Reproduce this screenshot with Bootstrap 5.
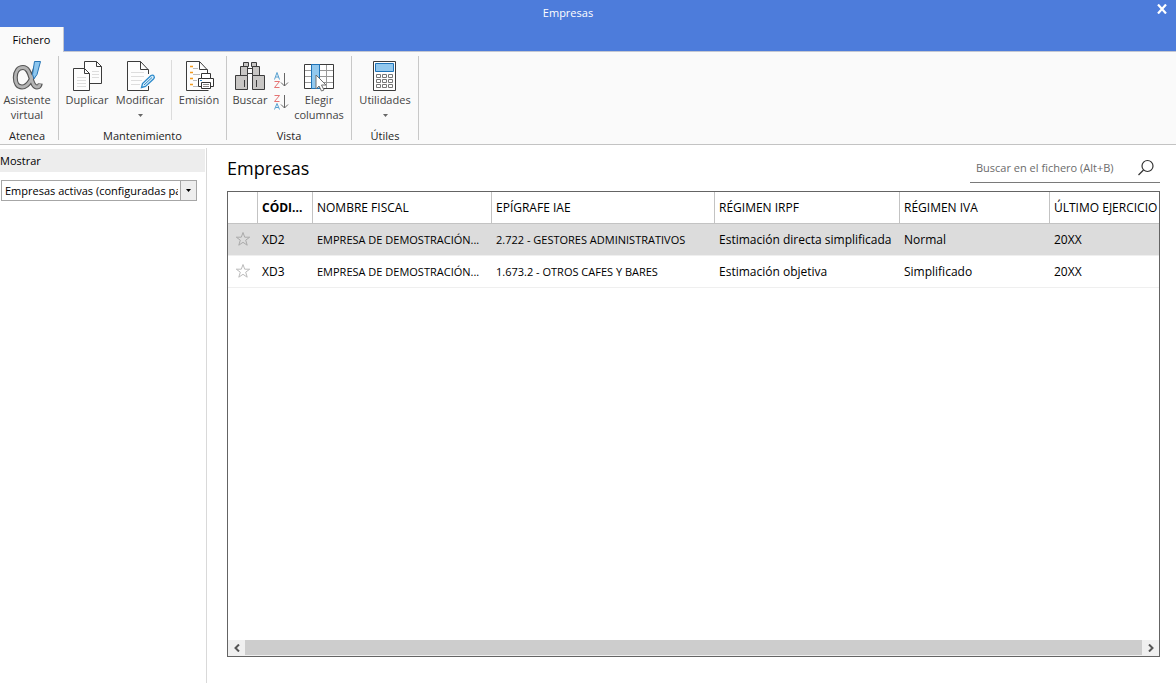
<!DOCTYPE html>
<html lang="es">
<head>
<meta charset="utf-8">
<meta name="viewport" content="width=device-width, initial-scale=1">
<title>Empresas</title>
<link href="https://cdn.jsdelivr.net/npm/bootstrap@5.3.0/dist/css/bootstrap.min.css" rel="stylesheet">
<style>
  body { font-family: "Open Sans", "Noto Sans", sans-serif; font-size: 12px; line-height: 16px; color: #000; background: #fff; }
  button { font: inherit; color: inherit; background: none; border: 0; padding: 0; }
  svg { display: block; flex: none; }
  .top-bar { background: #4d7cdb; height: 27px; color: #fff; }
  .window-title { padding: 5px 12px 0 0; font-size: 11px; }
  .close-btn { width: 28px; height: 18px; }
  .tab-strip { background: #4d7cdb; height: 25px; border-bottom: 1px solid #c3c7d2; }
  .tab-link { width: 64px; height: 25px; background: #fafafa; color: #000; font-size: 11px; line-height: 26px; text-align: center; text-decoration: none; border-right: 1px solid #c3c7d2; }
  .ribbon { background: #fafafa; border-bottom: 1px solid #c3c3c3; padding: 4px 0; font-size: 11px; line-height: 15px; color: #444; }
  .ribbon-group { border-right: 1px solid #c8c8c8; height: 84px; }
  .ribbon-items { height: 72px; padding-top: 4px; }
  .group-caption { color: #1e1e1e; text-align: center; height: 15px; }
  .tool { display: flex; flex-direction: column; align-items: center; height: 66px; white-space: nowrap; }
  .tool svg.arrow { margin-top: 7px; }
  .w-a { width: 54px; } .w-b { width: 56px; } .w-c { width: 50px; } .w-d { width: 54px; }
  .w-e { width: 46px; } .w-f { width: 16px; } .w-g { width: 60px; margin-right: 2px; } .w-h { width: 66px; }
  .inner-rule { width: 1px; height: 60px; margin-left: 6px; background: #dcdcdc; }
  .side-panel { width: 207px; border-right: 1px solid #d9d9d9; font-size: 11px; margin-top: 3px; padding-right: 1px; }
  .side-title { background: #ededed; height: 23px; line-height: 24px; margin-top: 1px; }
  .filter { width: 196px; height: 21px; margin: 8px 0 0 1px; border: 1px solid #a6a6a6; position: relative; }
  .filter select { width: 100%; height: 100%; border: 0; appearance: none; background: #fff; color: #000; padding: 0 18px 0 3px; border-radius: 0; font-size: 11px; overflow: hidden; }
  .filter-arrow { position: absolute; right: 0; top: 0; bottom: 0; width: 16px; border-left: 1px solid #a6a6a6; background: #eee; pointer-events: none; }
  .main-area { padding: 10px 16px 26px 20px; min-width: 0; }
  .page-title { font-size: 18px; line-height: 26px; font-weight: 400; margin: 0; }
  .search-box { width: 190px; height: 28px; border-bottom: 1px solid #7a7a7a; padding-bottom: 1px; }
  .search-box input { border: 0; outline: 0; background: none; padding: 0 0 0 6px; min-width: 0; font-size: 11px; color: #000; }
  .search-box input::placeholder { color: #6b6b6b; opacity: 1; }
  .search-box button { margin-right: 5px; }
  .grid-frame { border: 1px solid #646464; margin-top: 8px; }
  .data-grid { table-layout: fixed; width: 100%; min-width: 931px; border-collapse: separate; border-spacing: 0; }
  .data-grid th, .data-grid td { height: 32px; padding: 0 0 0 4px; white-space: nowrap; overflow: hidden; text-overflow: ellipsis; font-weight: 400; border-bottom: 1px solid #efefef; }
  .data-grid th { border-bottom-color: #c3c3c3; border-right: 1px solid #c3c3c3; }
  .data-grid th:last-child { border-right: 0; }
  .data-grid th.sorted { font-weight: 700; }
  .data-grid tr.chosen td { background: #dcdcdc; }
  .data-grid td.caps { font-size: 11px; }
  .data-grid td:first-child { padding: 0 0 1px 7px; }
  .col-star { width: 30px; } .col-code { width: 55px; } .col-name { width: 179px; }
  .col-iae { width: 223px; } .col-irpf { width: 185px; } .col-iva { width: 150px; }
  .scroll-strip { height: 16px; background: #f0f0f0; }
  .scroll-strip button { width: 17px; height: 15px; display: grid; place-items: center; }
  .scroll-thumb { height: 15px; background: #cdcdcd; }
</style>
</head>
<body class="d-flex flex-column min-vh-100">

<header>
  <div class="top-bar d-flex">
    <div class="window-title flex-grow-1 text-center">Empresas</div>
    <button class="close-btn d-flex justify-content-center align-items-center" type="button" aria-label="Cerrar">
      <svg width="10" height="10" viewBox="0 0 10 10"><path d="M1 .5 9 9.500M9 .5 1 9.500" stroke="#fff" stroke-width="2.200"/></svg>
    </button>
  </div>
  <nav class="tab-strip d-flex"><a class="tab-link" href="#">Fichero</a></nav>

  <div class="ribbon d-flex" role="toolbar" aria-label="Fichero">
    <section class="ribbon-group pe-1">
      <div class="ribbon-items d-flex">
        <button class="tool w-a" type="button">
          <svg class="icon" width="32" height="32" viewBox="0 0 32 32" fill="none">
            <path d="M25 7C22.500 15 18.500 27 11 27 6.500 27 4.300 23 4.300 17.500 4.300 11.500 7.300 7.500 12 7.500 21 7.500 19 27 26 27 28 27 29 25.500 29.300 23.500" stroke="#555" stroke-width="5"/>
            <path d="M24.500 8.500C22.500 15 18.500 27 11 27 6.500 27 4.300 23 4.300 17.500 4.300 11.500 7.300 7.500 12 7.500 21 7.500 19 27 26 27 27.800 27 28.700 25.800 29 24" stroke="#b4b4b4" stroke-width="2.800"/>
            <path d="M23.500 1.500h6L26 14.500l-3 4.300-1.500-4.500Z" fill="#8dc6ee" stroke="#2574b5"/>
          </svg>
          <span>Asistente<br>virtual</span>
        </button>
      </div>
      <div class="group-caption">Atenea</div>
    </section>

    <section class="ribbon-group">
      <div class="ribbon-items d-flex">
        <button class="tool w-b" type="button">
          <svg class="icon" width="32" height="32" viewBox="0 0 32 32" fill="none">
            <path d="M13.500 1.500h12l5 5v17h-17Z" fill="#fdfdfd" stroke="#3b3b3b"/>
            <path d="M25.500 1.500v5h5" stroke="#3b3b3b"/>
            <path d="M21 11.500h7M21 14.500h7M21 17.500h7" stroke="#ddd"/>
            <path d="M2.500 8.500h11l5 5v17h-16Z" fill="#fdfdfd" stroke="#3b3b3b"/>
            <path d="M13.500 8.500v5h5" stroke="#3b3b3b"/>
            <path d="M6 17.500h9M6 20.500h9M6 23.500h9M6 26.500h9" stroke="#ddd"/>
          </svg>
          <span>Duplicar</span>
        </button>
        <button class="tool w-c" type="button">
          <svg class="icon" width="32" height="32" viewBox="0 0 32 32" fill="none">
            <path d="M24.500 14V10L16.500 1.500h-13v29h21V26" fill="#fdfdfd" stroke="#3b3b3b"/>
            <path d="M16.500 1.500v8h8" stroke="#3b3b3b"/>
            <path d="M7 12.500h13M7 16.500h13M7 20.500h11M7 24.500h9" stroke="#ddd"/>
            <path d="m17.500 27.500 1-4 8.500-8q2-1 3 .500t-.500 3l-8 7.500Z" fill="#d9edf9" stroke="#2e8bcb" stroke-width="1.300"/>
            <path d="m20 25 8-7.500" stroke="#2e8bcb"/>
          </svg>
          <span>Modificar</span>
          <svg class="arrow" width="5" height="3" viewBox="0 0 5 3"><path d="M0 0h5L2.500 3Z" fill="#666"/></svg>
        </button>
        <div class="inner-rule"></div>
        <button class="tool w-d" type="button">
          <svg class="icon" width="32" height="32" viewBox="0 0 32 32" fill="none">
            <path d="M24.500 13V10L16.500 1.500h-13v29h22" fill="#fdfdfd" stroke="#3b3b3b"/>
            <path d="M16.500 1.500v8h8" stroke="#3b3b3b"/>
            <path d="M7 6.500h3M7 12.500h3M7 18.500h3M7 24.500h3" stroke="#f39a1e" stroke-width="1.400"/>
            <path d="M10 8.500h5M10 14.500h7M10 20.500h4M10 26.500h5" stroke="#bbb"/>
            <path d="M18.500 18.500v-5h9v5h3v8h-15v-8Z" fill="#fff" stroke="#333"/>
            <path d="M18.500 18.500h9" stroke="#333"/>
            <path d="M18.500 22.500h9v6h-9Z" fill="#fff" stroke="#333"/>
            <path d="M20 24.500h6M20 26.500h6" stroke="#888"/>
            <path d="M17 20.500h2" stroke="#2e8bcb"/>
          </svg>
          <span>Emisión</span>
        </button>
      </div>
      <div class="group-caption">Mantenimiento</div>
    </section>

    <section class="ribbon-group">
      <div class="ribbon-items d-flex">
        <button class="tool w-e" type="button">
          <svg class="icon" width="32" height="32" viewBox="0 0 32 32" fill="#c8c6c4" stroke="#3b3b3b">
            <path d="M9.500 2.500h5v4h-5ZM17.500 2.500h5v4h-5Z"/>
            <path d="M13.500 8.500h5v5h-5Z" fill="#fafafa"/>
            <path d="M6.500 6.500h7v9h-7ZM18.500 6.500h7v9h-7Z"/>
            <path d="M1.500 15.500h12v14h-12ZM18.500 15.500h12v14h-12Z"/>
            <path d="M10.500 20v7M22.500 20v7"/>
          </svg>
          <span>Buscar</span>
        </button>
        <div class="w-f d-flex flex-column align-items-end pt-2">
          <button type="button" aria-label="Orden ascendente" class="mt-1 mb-1">
            <svg width="16" height="18" viewBox="0 0 16 18" fill="none">
              <path d="m1.500 7.500 2.500-7 2.500 7M2.500 5h3.300" stroke="#57a0d0"/><path d="M1.500 9.500h5l-5 6h5" stroke="#e57373"/>
              <path d="M11.500 1v13M8 10.500l3.500 3.500 3.500-3.500" stroke="#666"/>
            </svg>
          </button>
          <button type="button" aria-label="Orden descendente">
            <svg width="16" height="18" viewBox="0 0 16 18" fill="none">
              <path d="M1.500 1.500h5l-5 6h5" stroke="#e57373"/><path d="m1.500 15.500 2.500-6 2.500 6M2.500 13.500h3.300" stroke="#57a0d0"/>
              <path d="M11.500 1v13M8 10.500l3.500 3.500 3.500-3.500" stroke="#666"/>
            </svg>
          </button>
        </div>
        <button class="tool w-g" type="button">
          <svg class="icon" width="32" height="32" viewBox="0 0 32 32" fill="none">
            <path d="M1.500 4.500h29v24h-29Z" fill="#fff"/>
            <path d="M1 10.500h30M1 16.500h30M1 22.500h30M23.500 4v25" stroke="#999"/>
            <path d="M1.500 4.500h29v24h-29Z" stroke="#3b3b3b"/>
            <path d="M8.500 4.500h8v24h-8Z" fill="#92c8ee" stroke="#1e73b8"/>
            <path d="M13 15v14l3-3 2.500 5 2.500-1-2.500-5h4.500Z" fill="#fff" stroke="#707070"/>
          </svg>
          <span>Elegir<br>columnas</span>
        </button>
      </div>
      <div class="group-caption">Vista</div>
    </section>

    <section class="ribbon-group">
      <div class="ribbon-items d-flex">
        <button class="tool w-h" type="button">
          <svg class="icon" width="32" height="32" viewBox="0 0 32 32" fill="none">
            <path d="M4.500 1.500h22v29h-22Z" fill="#fff" stroke="#3b3b3b"/>
            <path d="M6.500 3.500h18v8h-18Z" fill="#92c8ee" stroke="#1e73b8"/>
            <path d="M7.500 14.500h4v3h-4ZM13.500 14.500h4v3h-4ZM19.500 14.500h4v3h-4ZM7.500 19.500h4v3h-4ZM13.500 19.500h4v3h-4ZM19.500 19.500h4v3h-4ZM7.500 24.500h4v3h-4ZM13.500 24.500h4v3h-4ZM19.500 24.500h4v3h-4Z" stroke="#777"/>
          </svg>
          <span>Utilidades</span>
          <svg class="arrow" width="5" height="3" viewBox="0 0 5 3"><path d="M0 0h5L2.500 3Z" fill="#666"/></svg>
        </button>
      </div>
      <div class="group-caption">Útiles</div>
    </section>
  </div>
</header>

<div class="d-flex flex-grow-1">
  <aside class="side-panel flex-shrink-0">
    <label class="side-title d-block" for="filtro">Mostrar</label>
    <div class="filter">
      <select id="filtro"><option>Empresas activas (configuradas para mostrar)</option></select>
      <span class="filter-arrow d-flex align-items-center justify-content-center"><svg width="5" height="3" viewBox="0 0 5 3"><path d="M0 0h5L2.500 3Z"/></svg></span>
    </div>
  </aside>

  <main class="main-area d-flex flex-column flex-grow-1">
    <div class="d-flex justify-content-between">
      <h1 class="page-title">Empresas</h1>
      <div class="search-box d-flex align-items-center">
        <input class="flex-grow-1" type="search" placeholder="Buscar en el fichero (Alt+B)" aria-label="Buscar en el fichero">
        <button type="button" aria-label="Buscar">
          <svg width="18" height="18" viewBox="0 0 18 18" fill="none" stroke="#333" stroke-width="1.200"><circle cx="10.500" cy="7" r="5.500"/><path d="m6.500 11-5 5"/></svg>
        </button>
      </div>
    </div>

    <div class="grid-frame d-flex flex-column flex-grow-1">
      <div class="flex-grow-1 overflow-hidden">
        <table class="data-grid">
          <colgroup><col class="col-star"><col class="col-code"><col class="col-name"><col class="col-iae"><col class="col-irpf"><col class="col-iva"><col></colgroup>
          <thead>
            <tr><th aria-label="Favorito"></th><th class="sorted">CÓDI...</th><th>NOMBRE FISCAL</th><th>EPÍGRAFE IAE</th><th>RÉGIMEN IRPF</th><th>RÉGIMEN IVA</th><th>ÚLTIMO EJERCICIO</th></tr>
          </thead>
          <tbody>
            <tr class="chosen">
              <td><svg width="16" height="16" viewBox="0 0 16 16" fill="none" stroke="#aaa"><path d="m8 1.500 1.700 4.700h5l-4 3 1.500 5L8 11.300l-4.200 2.900 1.500-5-4-3h5Z"/></svg></td>
              <td>XD2</td><td class="caps">EMPRESA DE DEMOSTRACIÓN...</td><td class="caps">2.722 - GESTORES ADMINISTRATIVOS</td><td>Estimación directa simplificada</td><td>Normal</td><td>20XX</td>
            </tr>
            <tr>
              <td><svg width="16" height="16" viewBox="0 0 16 16" fill="none" stroke="#bbb"><path d="m8 1.500 1.700 4.700h5l-4 3 1.500 5L8 11.300l-4.200 2.900 1.500-5-4-3h5Z"/></svg></td>
              <td>XD3</td><td class="caps">EMPRESA DE DEMOSTRACIÓN...</td><td class="caps">1.673.2 - OTROS CAFES Y BARES</td><td>Estimación objetiva</td><td>Simplificado</td><td>20XX</td>
            </tr>
          </tbody>
        </table>
      </div>
      <div class="scroll-strip d-flex">
        <button type="button" aria-label="Desplazar a la izquierda"><svg width="8" height="8" viewBox="0 0 8 8" fill="none" stroke="#555" stroke-width="2"><path d="M6 .5 2.500 4 6 7.500"/></svg></button>
        <div class="scroll-thumb flex-grow-1"></div>
        <button type="button" aria-label="Desplazar a la derecha"><svg width="8" height="8" viewBox="0 0 8 8" fill="none" stroke="#555" stroke-width="2"><path d="M2 .5 5.500 4 2 7.500"/></svg></button>
      </div>
    </div>
  </main>
</div>

<script src="https://cdn.jsdelivr.net/npm/bootstrap@5.3.0/dist/js/bootstrap.bundle.min.js"></script>
</body>
</html>
